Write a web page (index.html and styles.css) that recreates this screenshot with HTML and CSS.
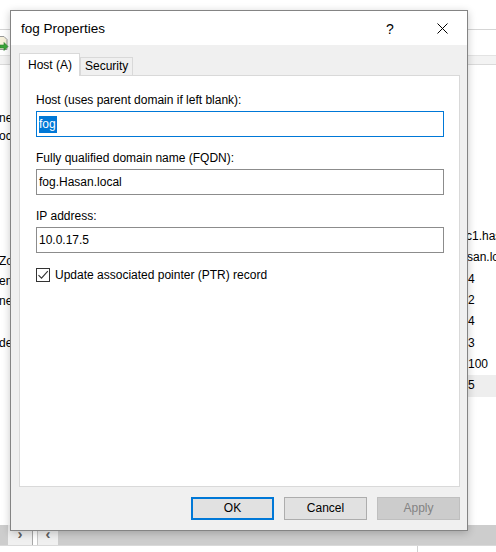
FILE: index.html
```html
<!DOCTYPE html>
<html>
<head>
<meta charset="utf-8">
<link rel="stylesheet" href="styles.css">
</head>
<body>
<div class="screen">
  <div class="bg">
    <div class="bg-menu"></div>
    <div class="bg-toolbar">
      <svg class="bg-icon" width="10" height="16" viewBox="0 0 10 16">
        <path d="M-4 1.5h8l3 3v10h-11z" fill="#f7f1dc" stroke="#9a9a9a"/>
        <path d="M0 10h4v-2.5l4 4-4 4v-2.5h-4z" fill="#3aa63a" stroke="#2b7d2b" stroke-width="0.6"/>
      </svg>
    </div>
    <div class="bg-header"></div>
    <div class="bg-main">
      <div class="tree">
        <div class="trow t1">nes</div>
        <div class="trow t2">ocal</div>
        <div class="trow t3">Zones</div>
        <div class="trow">ences</div>
        <div class="trow">ners</div>
        <div class="trow t6">ders</div>
      </div>
      <div class="splitter"></div>
      <div class="list">
        <div class="lrow cut2">c1.hasan.local</div>
        <div class="lrow cut1">san.local</div>
        <div class="lrow">4</div>
        <div class="lrow">2</div>
        <div class="lrow">4</div>
        <div class="lrow">3</div>
        <div class="lrow">100</div>
        <div class="lrow sel">5</div>
      </div>
    </div>
    <div class="bg-scroll">
      <div class="sb-left">
        <div class="sb-thumb-l"></div>
        <div class="sb-btn">&#x203A;</div>
      </div>
      <div class="sb-split"></div>
      <div class="sb-right">
        <div class="sb-btn">&#x2039;</div>
        <div class="sb-thumb-r"></div>
      </div>
    </div>
    <div class="bg-status"><div class="status-cell"></div></div>
  </div>

  <div class="dialog">
    <div class="titlebar">
      <div class="title">fog Properties</div>
      <div class="tb-help">?</div>
      <div class="tb-close">
        <svg width="11" height="11" viewBox="0 0 11 11"><path d="M0.5 0.5L10.5 10.5M10.5 0.5L0.5 10.5" stroke="#000" stroke-width="1"/></svg>
      </div>
    </div>
    <div class="dbody">
      <div class="tabs">
        <div class="tab active">Host (A)</div>
        <div class="tab">Security</div>
      </div>
      <div class="panel">
        <div class="field">
          <div class="label">Host (uses parent domain if left blank):</div>
          <div class="input focused"><span class="selected">fog</span></div>
        </div>
        <div class="field">
          <div class="label">Fully qualified domain name (FQDN):</div>
          <div class="input">fog.Hasan.local</div>
        </div>
        <div class="field">
          <div class="label">IP address:</div>
          <div class="input">10.0.17.5</div>
        </div>
        <div class="check-row">
          <div class="checkbox">
            <svg width="12" height="12" viewBox="0 0 12 12"><path d="M1.5 6.2L4.5 9.2L10.8 2.2" fill="none" stroke="#333" stroke-width="1.1"/></svg>
          </div>
          <div class="check-label">Update associated pointer (PTR) record</div>
        </div>
      </div>
      <div class="buttons">
        <div class="btn default">OK</div>
        <div class="btn">Cancel</div>
        <div class="btn disabled">Apply</div>
      </div>
    </div>
  </div>
</div>
</body>
</html>
```

FILE: styles.css
```css
* { box-sizing: border-box; }
html, body { margin: 0; padding: 0; }
body {
  font-family: "Liberation Sans", Arial, sans-serif;
  font-size: 12px;
  color: #000;
  background: #fff;
}
.screen {
  position: relative;
  width: 496px;
  height: 552px;
  overflow: hidden;
  background: #fff;
}

/* ---------- background window ---------- */
.bg {
  display: grid;
  grid-template-rows: 30px 26px 9px 460px 20px 7px;
  height: 552px;
}
.bg-menu { border-bottom: 1px solid #d5d5d5; }
.bg-toolbar {
  border-bottom: 1px solid #e3e3e3;
  padding-top: 5px;
}
.bg-icon { display: block; }
.bg-header {
  background: #f3f3f3;
  border-bottom: 1px solid #dadada;
}
.bg-main {
  display: flex;
  overflow: hidden;
}
.tree {
  width: 33px;
  border-right: 1px solid #a8a8a8;
  overflow: hidden;
  white-space: nowrap;
}
.trow {
  height: 20px;
  line-height: 20px;
  text-indent: -1px;
}
.t1 { margin-top: 43px; }
.t2 { margin-top: -2px; }
.t3 { margin-top: 105px; }
.t6 { margin-top: 22px; }
.splitter { width: 4px; }
.list {
  flex: 1;
  border-left: 1px solid #c8c8c8;
  padding-top: 161px;
  padding-left: 430px;
  white-space: nowrap;
  overflow: hidden;
}
.lrow {
  height: 21.33px;
  line-height: 21.33px;
}
.lrow.cut2 { text-indent: -2px; }
.lrow.cut1 { text-indent: -1px; }
.lrow.sel { background: #eeeeee; margin-left: -10px; padding-left: 10px; }

.bg-scroll {
  display: flex;
  background: #f0f0f0;
}
.sb-left {
  width: 33px;
  display: flex;
  border-right: 1px solid #a8a8a8;
}
.sb-thumb-l { width: 8px; background: #cdcdcd; }
.sb-btn {
  width: 24px;
  height: 20px;
  line-height: 18px;
  text-align: center;
  font-size: 15px;
  font-weight: bold;
  color: #606060;
}
.sb-split { width: 4px; background: #fff; }
.sb-right {
  flex: 1;
  display: flex;
  border-left: 1px solid #c8c8c8;
}
.sb-right .sb-btn { width: 20px; }
.sb-thumb-r { flex: 1; background: #cdcdcd; }
.bg-status {
  border-top: 1px solid #d9d9d9;
  display: flex;
}
.status-cell {
  width: 418px;
  border-right: 1px solid #d0d0d0;
}

/* ---------- dialog window ---------- */
.dialog {
  position: absolute;
  left: 10px;
  top: 10px;
  width: 458px;
  height: 521px;
  border: 1px solid #848484;
  background: #f0f0f0;
  box-shadow: 0 2px 8px rgba(0, 0, 0, 0.22);
  display: flex;
  flex-direction: column;
}
.titlebar {
  height: 34px;
  background: #fff;
  display: flex;
  align-items: center;
}
.title {
  flex: 1;
  padding-left: 10px;
  font-size: 13.5px;
  padding-top: 1px;
}
.tb-help {
  width: 54px;
  text-align: center;
  font-size: 14px;
  padding-top: 1px;
}
.tb-close {
  width: 50px;
  height: 34px;
  display: flex;
  align-items: center;
  justify-content: center;
  padding-top: 1px;
}
.tb-close svg { display: block; }

.dbody {
  flex: 1;
  padding: 8px 7px 10px 8px;
  display: flex;
  flex-direction: column;
}
.tabs {
  display: flex;
  align-items: flex-end;
  height: 23px;
  margin-bottom: -1px;
  position: relative;
  z-index: 1;
}
.tab {
  height: 19px;
  line-height: 17px;
  padding: 0 4px;
  border: 1px solid #d9d9d9;
  background: #f0f0f0;
  white-space: nowrap;
}
.tab.active {
  height: 23px;
  line-height: 22px;
  padding: 0 7px 0 8px;
  background: #fff;
  border-bottom: none;
}
.panel {
  height: 412px;
  background: #fff;
  border: 1px solid #d9d9d9;
  padding: 17px 16px 0 16px;
}
.field { margin-bottom: 14px; }
.label {
  line-height: 14px;
  margin-bottom: 4px;
  white-space: nowrap;
}
.input {
  width: 408px;
  height: 26px;
  border: 1px solid #8c8c8c;
  background: #fff;
  padding-left: 2px;
  line-height: 24px;
  font-size: 12px;
  white-space: nowrap;
}
.input.focused { border-color: #0078d7; }
.selected {
  background: #0078d7;
  color: #fff;
  padding: 1px 1px 2px 0;
}
.check-row {
  display: flex;
  align-items: center;
  margin-top: 0;
  height: 15px;
}
.checkbox {
  width: 14px;
  height: 14px;
  border: 1px solid #333;
  background: #fff;
  display: flex;
  align-items: center;
  justify-content: center;
}
.checkbox svg { display: block; }
.check-label {
  margin-left: 5px;
  line-height: 14px;
  white-space: nowrap;
}

.buttons {
  display: flex;
  justify-content: flex-end;
  gap: 10px;
  margin-top: 10px;
}
.btn {
  width: 83px;
  height: 23px;
  line-height: 21px;
  text-align: center;
  background: #e1e1e1;
  border: 1px solid #adadad;
}
.btn.default {
  border-color: #0078d7;
  box-shadow: inset 0 0 0 1px #0078d7;
}
.btn.disabled {
  background: #cccccc;
  border-color: #bfbfbf;
  color: #838383;
}
```
